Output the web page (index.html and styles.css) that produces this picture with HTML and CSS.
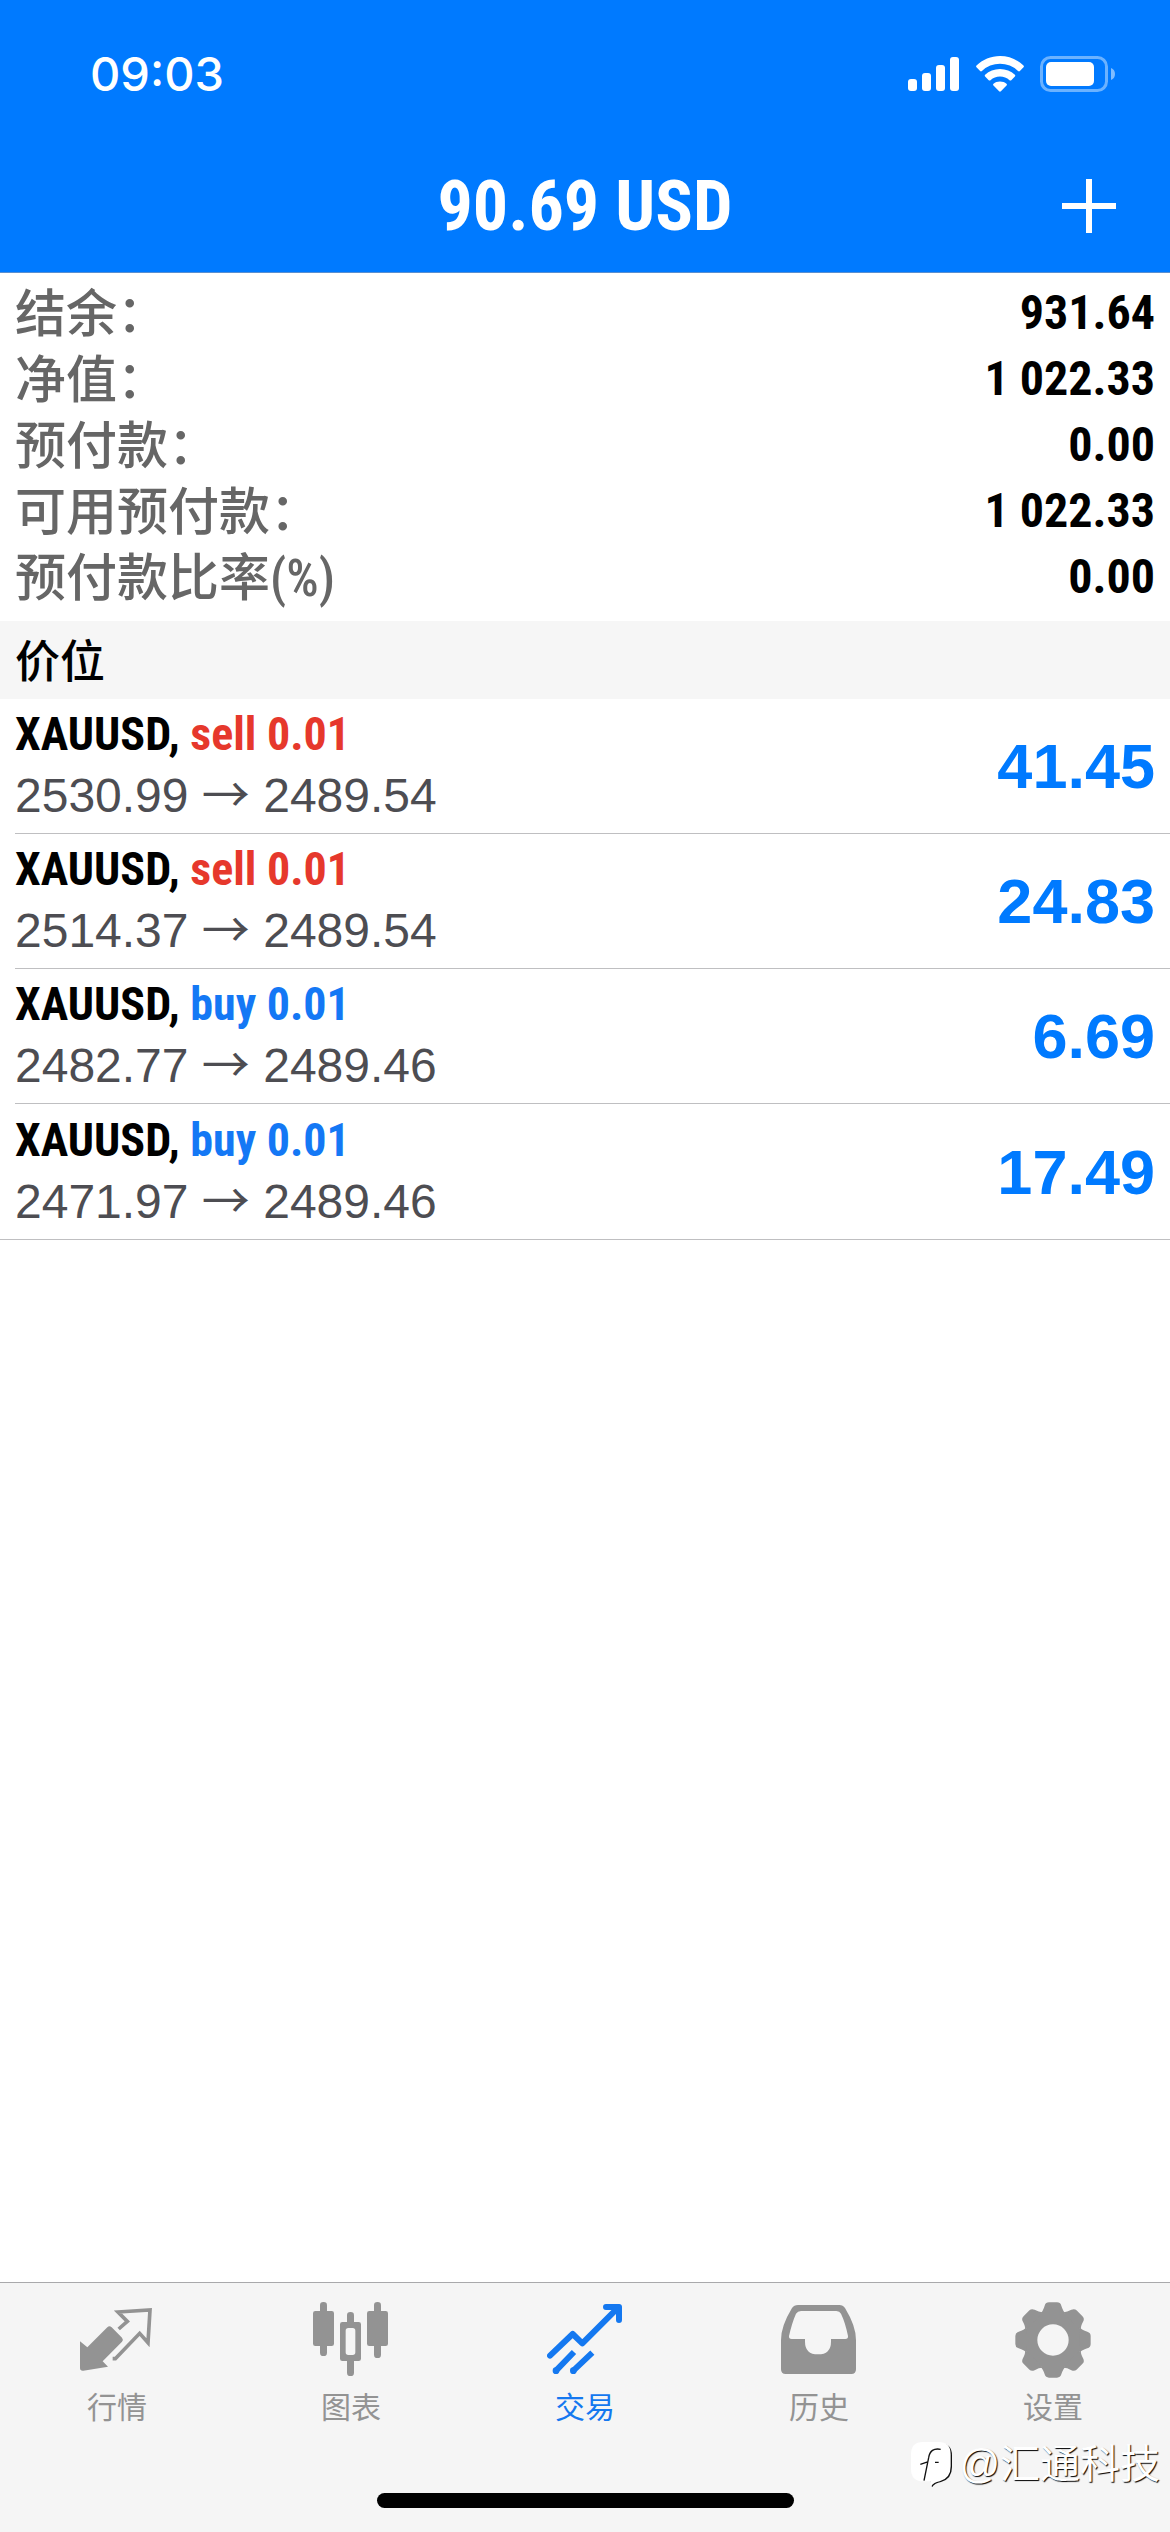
FILE: index.html
```html
<!DOCTYPE html>
<html lang="zh-CN">
<head>
<meta charset="utf-8">
<meta name="viewport" content="width=device-width, initial-scale=1">
<title>交易</title>
<link rel="stylesheet" href="styles.css">
</head>
<body>
<header class="top">
  <div class="status">
    <time class="clock">09:03</time>
    <div class="status-icons">
      <svg class="signal" viewBox="0 0 52 36" aria-hidden="true">
        <rect x="0" y="23" width="9" height="12" rx="3"/>
        <rect x="14" y="17" width="9" height="18" rx="3"/>
        <rect x="28" y="9" width="9" height="26" rx="3"/>
        <rect x="42" y="1" width="9" height="34" rx="3"/>
      </svg>
      <svg class="wifi" viewBox="0 0 48 36" aria-hidden="true">
        <path d="M24 0C33 0 41.500 3.600 47.500 9.500Q48.300 10.400 47.500 11.300L43.900 15Q43 15.800 42.100 15A26 26 0 0 0 5.900 15Q5 15.800 4.100 15L.5 11.300Q-.3 10.400 .5 9.500C6.500 3.600 15 0 24 0Z"/>
        <path d="M24 13C29.700 13 35 15.200 38.900 18.800Q39.800 19.700 38.900 20.600L35.300 24.200Q34.400 25 33.500 24.200A14 14 0 0 0 14.500 24.200Q13.600 25 12.700 24.200L9.100 20.600Q8.200 19.700 9.100 18.800C13 15.200 18.300 13 24 13Z"/>
        <path d="M24 25.500C26.600 25.500 28.800 26.400 30.500 27.800Q31.400 28.700 30.500 29.600L24.900 35.300Q24 36.100 23.100 35.300L17.500 29.600Q16.600 28.700 17.500 27.800C19.200 26.400 21.400 25.500 24 25.500Z"/>
      </svg>
      <svg class="battery" viewBox="0 0 76 36" aria-hidden="true">
        <rect x="1.500" y="1.500" width="65" height="33" rx="9" fill="none" stroke="#fff" stroke-width="3" opacity=".42"/>
        <rect x="6" y="6" width="48" height="24" rx="5"/>
        <path d="M71 12Q75 13.500 75 18T71 24Z" opacity=".5"/>
      </svg>
    </div>
  </div>
  <div class="nav">
    <h1 class="title">90.69 USD</h1>
    <button class="add" type="button" aria-label="新订单">
      <svg viewBox="0 0 54 54" aria-hidden="true"><path d="M27 0V54M0 27H54" stroke="#fff" stroke-width="6"/></svg>
    </button>
  </div>
</header>

<main class="content">
  <dl class="summary">
    <div class="summary-row"><dt>结余：</dt><dd>931.64</dd></div>
    <div class="summary-row"><dt>净值：</dt><dd>1 022.33</dd></div>
    <div class="summary-row"><dt>预付款：</dt><dd>0.00</dd></div>
    <div class="summary-row"><dt>可用预付款：</dt><dd>1 022.33</dd></div>
    <div class="summary-row"><dt>预付款比率<span class="unit">(%)</span></dt><dd>0.00</dd></div>
  </dl>
  <h2 class="section">价位</h2>
  <ul class="positions">
    <li class="position">
      <div>
        <p class="order">XAUUSD, <span class="sell">sell 0.01</span></p>
        <p class="prices">2530.99 <span class="arrow">→</span> 2489.54</p>
      </div>
      <strong class="profit">41.45</strong>
    </li>
    <li class="position">
      <div>
        <p class="order">XAUUSD, <span class="sell">sell 0.01</span></p>
        <p class="prices">2514.37 <span class="arrow">→</span> 2489.54</p>
      </div>
      <strong class="profit">24.83</strong>
    </li>
    <li class="position">
      <div>
        <p class="order">XAUUSD, <span class="buy">buy 0.01</span></p>
        <p class="prices">2482.77 <span class="arrow">→</span> 2489.46</p>
      </div>
      <strong class="profit">6.69</strong>
    </li>
    <li class="position">
      <div>
        <p class="order">XAUUSD, <span class="buy">buy 0.01</span></p>
        <p class="prices">2471.97 <span class="arrow">→</span> 2489.46</p>
      </div>
      <strong class="profit">17.49</strong>
    </li>
  </ul>
</main>

<footer class="bottom">
  <nav class="tabs">
    <a class="tab" href="#quotes">
      <svg class="tab-icon" viewBox="237 96 228 228" aria-hidden="true">
        <path d="M240 214L262 232L322 172Q328 165 335 172L366 203Q371 209 366 215L308 274L324 290L250 302Q240 303 240 294Z"/>
        <path d="M356 177L382 154L354 126L450 120L444 218L419 190L346 266H338" fill="none" stroke="currentColor" stroke-width="11"/>
      </svg>
      <span>行情</span>
    </a>
    <a class="tab" href="#charts">
      <svg class="tab-icon" viewBox="939 96 228 228" aria-hidden="true">
        <rect x="939" y="123" width="63" height="105" rx="7"/>
        <rect x="960" y="96" width="21" height="162" rx="10"/>
        <rect x="1101" y="123" width="63" height="105" rx="7"/>
        <rect x="1122" y="96" width="21" height="168" rx="10"/>
        <rect x="1041" y="126" width="21" height="42" rx="10"/>
        <rect x="1041" y="262" width="21" height="56" rx="10"/>
        <path fill-rule="evenodd" d="M1027 156H1076Q1083 156 1083 163V266Q1083 273 1076 273H1027Q1020 273 1020 266V163Q1020 156 1027 156ZM1045 174Q1037 174 1037 182V247Q1037 255 1045 255H1058Q1066 255 1066 247V182Q1066 174 1058 174Z"/>
      </svg>
      <span>图表</span>
    </a>
    <a class="tab tab-active" href="#trade" aria-current="page">
      <svg class="tab-icon" viewBox="441 96 228 228" aria-hidden="true">
        <g fill="none" stroke="currentColor" stroke-width="18" stroke-linejoin="round">
          <path d="M450 257L518 192L547 220L655 112" stroke-linecap="round"/>
          <path d="M618 111H657V150" stroke-linecap="round"/>
          <path d="M522 246L468 302M577 248L520 302"/>
        </g>
        <circle cx="468" cy="302" r="10"/><circle cx="520" cy="302" r="10"/>
      </svg>
      <span>交易</span>
    </a>
    <a class="tab" href="#history">
      <svg class="tab-icon" viewBox="33 96 228 228" aria-hidden="true">
        <path fill-rule="evenodd" d="M84 105H208Q219 105 225 114Q258 168 258 210V298Q258 312 244 312H47Q33 312 33 298V210Q33 168 66 114Q72 105 84 105ZM93 123Q83 123 78 131Q66 158 57 198Q56 207 65 207H105V215Q105 253 144 253T183 215V207H226Q235 207 234 198Q226 158 213 131Q209 123 199 123Z"/>
      </svg>
      <span>历史</span>
    </a>
    <a class="tab" href="#settings">
      <svg class="tab-icon" viewBox="-114 -114 228 228" aria-hidden="true">
        <defs><path id="tooth" d="M-38 -80Q-30 -86 -25 -103Q-22 -113 -12 -113H12Q22 -113 25 -103Q30 -86 38 -80Z"/></defs>
        <circle r="67" fill="none" stroke="currentColor" stroke-width="40"/>
        <use href="#tooth"/><use href="#tooth" transform="rotate(45)"/><use href="#tooth" transform="rotate(90)"/><use href="#tooth" transform="rotate(135)"/><use href="#tooth" transform="rotate(180)"/><use href="#tooth" transform="rotate(225)"/><use href="#tooth" transform="rotate(270)"/><use href="#tooth" transform="rotate(315)"/>
      </svg>
      <span>设置</span>
    </a>
  </nav>
  <div class="home-indicator"></div>
  <div class="watermark">
    <svg viewBox="414 528 126 141" aria-hidden="true">
      <path d="M448 535H500Q537 535 537 572V606Q537 642 504 651Q486 654 477 667L474 653" fill="#111"/>
      <path d="M450 531H497Q533 531 533 568V604Q533 640 500 649Q482 652 474 664L472 649H450Q414 649 414 612V568Q414 531 450 531Z" fill="#fff"/>
      <path d="M503 553Q472 547 467 578L453 647M442 598L466 590M486 592H497" fill="none" stroke="#111" stroke-width="4"/>
    </svg>
    <span>@汇通科技</span>
  </div>
</footer>
</body>
</html>
```

FILE: styles.css
```css
* {
  box-sizing: border-box;
  margin: 0;
  padding: 0;
}

:root {
  --blue: #007aff;
  --bar: #f6f6f6;
  --line: #bfbfc1;
  --cjk: "Noto Sans CJK SC", sans-serif;
  --narrow: "Roboto Condensed", "Liberation Sans", sans-serif;
  --sans: "Liberation Sans", sans-serif;
}

body {
  display: flex;
  flex-direction: column;
  min-height: 100vh;
  background: #fff;
  color: #000;
  font-family: var(--cjk);
}

svg {
  display: block;
  fill: currentColor;
}

.top {
  background: var(--blue);
  border-bottom: 1px solid #5a8fd0;
  color: #fff;
}

.status {
  display: flex;
  align-items: center;
  justify-content: space-between;
  height: 140px;
  padding: 8px 54px 0 90px;
}

.clock {
  font: 500 47px/60px Inter, sans-serif;
}

.status-icons {
  display: flex;
  gap: 16px;
}

.signal {
  width: 52px;
  height: 36px;
}

.wifi {
  width: 48px;
  height: 36px;
}

.battery {
  width: 76px;
  height: 36px;
}

.nav {
  display: grid;
  grid-template-columns: 1fr auto 1fr;
  align-items: center;
  height: 132px;
  padding: 0 54px;
}

.title {
  grid-column: 2;
  font: 700 70px/84px var(--narrow);
}

.add {
  justify-self: end;
  width: 54px;
  height: 54px;
  border: 0;
  background: none;
  color: inherit;
}

.content {
  flex: 1;
}

.summary {
  padding: 7px 15px 11px;
}

.summary-row {
  display: flex;
  justify-content: space-between;
  height: 66px;
}

.summary dt {
  color: #666;
  font-size: 51px;
  font-weight: 500;
  line-height: 60px;
}

.unit {
  font-family: var(--narrow);
}

.summary dd {
  font: 700 48px/66px var(--narrow);
}

.section {
  padding: 0 15px 2px;
  background: var(--bar);
  font-size: 45px;
  font-weight: 500;
  line-height: 76px;
}

.positions {
  list-style: none;
  border-bottom: 1px solid var(--line);
}

.position {
  display: flex;
  align-items: center;
  justify-content: space-between;
  height: 135px;
  margin-left: 15px;
  padding-right: 15px;
  border-bottom: 1px solid var(--line);
}

.position:last-child {
  border-bottom: 0;
}

.order {
  font: 700 46px/62px var(--narrow);
}

.sell {
  color: #e6382c;
}

.buy {
  color: #1478f5;
}

.prices {
  padding-bottom: 2px;
  color: #4d4d52;
  font: 400 48px/62px var(--sans);
}

.arrow {
  font-family: var(--cjk);
  line-height: 1;
}

.profit {
  color: var(--blue);
  font: 700 63px/72px var(--sans);
}

.bottom {
  position: relative;
  padding-bottom: 24px;
  border-top: 1px solid #a9a9ab;
  background: #f5f5f5;
}

.tabs {
  display: grid;
  grid-template-columns: repeat(5, 1fr);
}

.tab {
  display: flex;
  flex-direction: column;
  align-items: center;
  gap: 9px;
  padding-top: 19px;
  color: #939393;
  font-size: 30px;
  line-height: 36px;
  text-decoration: none;
}

.tab-active {
  color: #1478f0;
}

.tab-icon {
  width: 76px;
  height: 76px;
}

.home-indicator {
  width: 417px;
  height: 15px;
  margin: 70px auto 0;
  border-radius: 8px;
  background: #000;
}

.watermark {
  position: absolute;
  right: 10px;
  bottom: 40px;
  display: flex;
  align-items: center;
  gap: 6px;
  color: #fff;
  font-family: "Liberation Sans", var(--cjk);
  font-size: 40px;
  line-height: 56px;
  text-shadow: 1px 1px 1px #000;
}

.watermark svg {
  width: 42px;
  height: 47px;
}
```
